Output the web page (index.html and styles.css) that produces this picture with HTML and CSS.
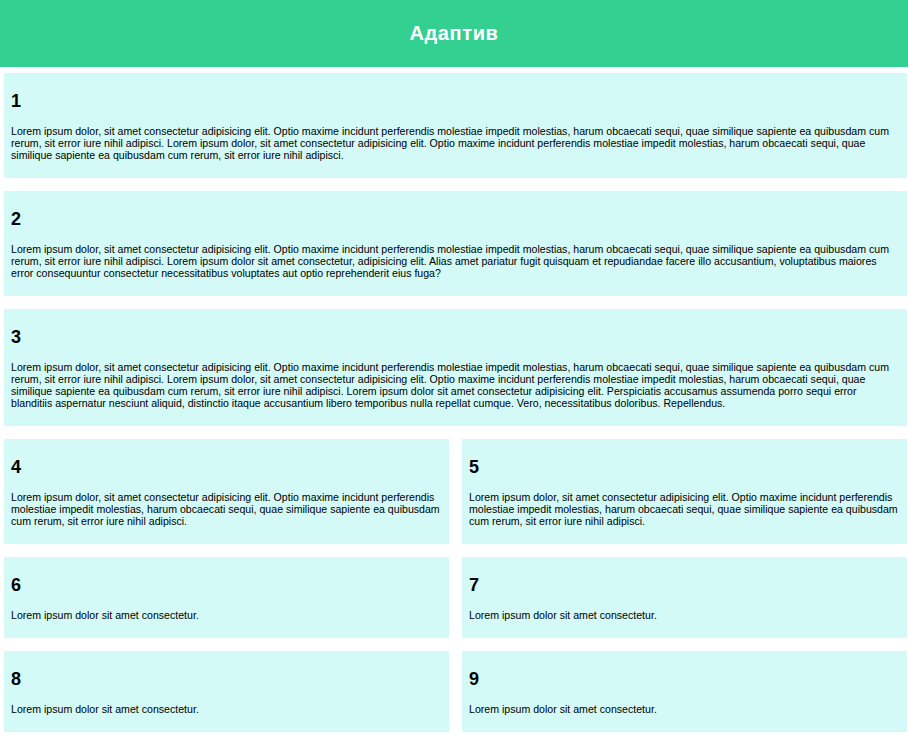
FILE: index.html
```html
<!DOCTYPE html>
<html lang="ru">
<head>
<meta charset="utf-8">
<title>Адаптив</title>
<link rel="stylesheet" href="styles.css">
</head>
<body>
<header class="top">
  <h1 class="top-title">Адаптив</h1>
</header>
<main class="grid">
  <section class="card card-wide">
    <h3 class="card-title">1</h3>
    <p class="card-text">Lorem ipsum dolor, sit amet consectetur adipisicing elit. Optio maxime incidunt perferendis molestiae impedit molestias, harum obcaecati sequi, quae similique sapiente ea quibusdam cum rerum, sit error iure nihil adipisci. Lorem ipsum dolor, sit amet consectetur adipisicing elit. Optio maxime incidunt perferendis molestiae impedit molestias, harum obcaecati sequi, quae similique sapiente ea quibusdam cum rerum, sit error iure nihil adipisci.</p>
  </section>
  <section class="card card-wide">
    <h3 class="card-title">2</h3>
    <p class="card-text">Lorem ipsum dolor, sit amet consectetur adipisicing elit. Optio maxime incidunt perferendis molestiae impedit molestias, harum obcaecati sequi, quae similique sapiente ea quibusdam cum rerum, sit error iure nihil adipisci. Lorem ipsum dolor sit amet consectetur, adipisicing elit. Alias amet pariatur fugit quisquam et repudiandae facere illo accusantium, voluptatibus maiores error consequuntur consectetur necessitatibus voluptates aut optio reprehenderit eius fuga?</p>
  </section>
  <section class="card card-wide">
    <h3 class="card-title">3</h3>
    <p class="card-text">Lorem ipsum dolor, sit amet consectetur adipisicing elit. Optio maxime incidunt perferendis molestiae impedit molestias, harum obcaecati sequi, quae similique sapiente ea quibusdam cum rerum, sit error iure nihil adipisci. Lorem ipsum dolor, sit amet consectetur adipisicing elit. Optio maxime incidunt perferendis molestiae impedit molestias, harum obcaecati sequi, quae similique sapiente ea quibusdam cum rerum, sit error iure nihil adipisci. Lorem ipsum dolor sit amet consectetur adipisicing elit. Perspiciatis accusamus assumenda porro sequi error blanditiis aspernatur nesciunt aliquid, distinctio itaque accusantium libero temporibus nulla repellat cumque. Vero, necessitatibus doloribus. Repellendus.</p>
  </section>
  <section class="card">
    <h3 class="card-title">4</h3>
    <p class="card-text">Lorem ipsum dolor, sit amet consectetur adipisicing elit. Optio maxime incidunt perferendis molestiae impedit molestias, harum obcaecati sequi, quae similique sapiente ea quibusdam cum rerum, sit error iure nihil adipisci.</p>
  </section>
  <section class="card">
    <h3 class="card-title">5</h3>
    <p class="card-text">Lorem ipsum dolor, sit amet consectetur adipisicing elit. Optio maxime incidunt perferendis molestiae impedit molestias, harum obcaecati sequi, quae similique sapiente ea quibusdam cum rerum, sit error iure nihil adipisci.</p>
  </section>
  <section class="card">
    <h3 class="card-title">6</h3>
    <p class="card-text">Lorem ipsum dolor sit amet consectetur.</p>
  </section>
  <section class="card">
    <h3 class="card-title">7</h3>
    <p class="card-text">Lorem ipsum dolor sit amet consectetur.</p>
  </section>
  <section class="card">
    <h3 class="card-title">8</h3>
    <p class="card-text">Lorem ipsum dolor sit amet consectetur.</p>
  </section>
  <section class="card">
    <h3 class="card-title">9</h3>
    <p class="card-text">Lorem ipsum dolor sit amet consectetur.</p>
  </section>
</main>
</body>
</html>
```

FILE: styles.css
```css
* {
  box-sizing: border-box;
}

body {
  margin: 0;
  font-family: "Liberation Sans", Arial, sans-serif;
  color: #000;
  background: #fff;
}

.top {
  height: 67px;
  background: #34d091;
  display: flex;
  align-items: center;
  justify-content: center;
}

.top-title {
  margin: 0;
  font-size: 20px;
  letter-spacing: 0.6px;
  font-weight: bold;
  color: #fff;
}

.grid {
  display: grid;
  grid-template-columns: 1fr 1fr;
  gap: 13px;
  padding: 6px 1px 10px 4px;
}

.card {
  background: #d3faf6;
  padding: 18px 7px 17px;
}

.card-wide {
  grid-column: 1 / -1;
}

.card-title {
  margin: 0 0 13.3px;
  font-size: 18px;
  line-height: 20.7px;
  font-weight: bold;
}

.card-text {
  margin: 0;
  font-size: 10.6px;
  line-height: 12px;
}
```
